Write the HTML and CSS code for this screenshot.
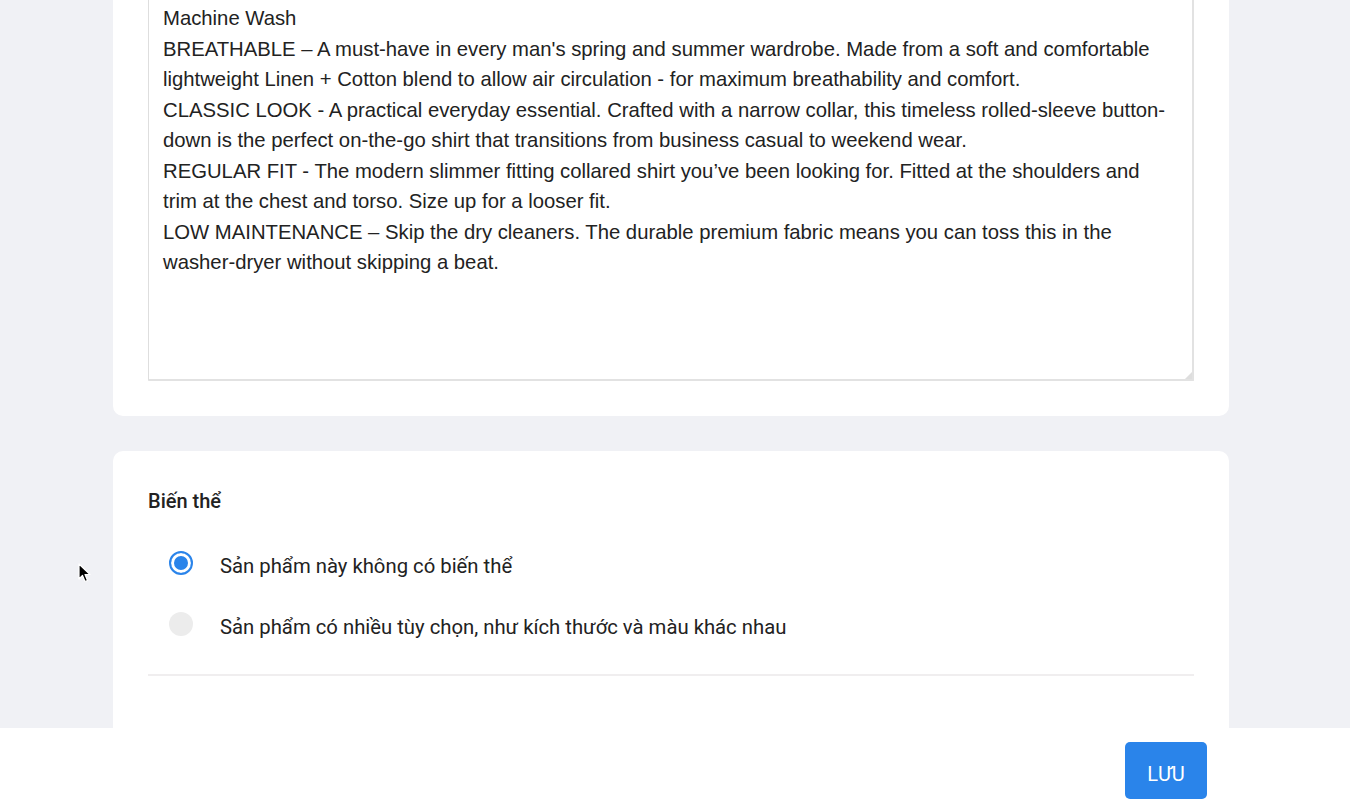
FILE: index.html
```html
<!DOCTYPE html>
<html lang="vi">
<head>
<meta charset="utf-8">
<link rel="stylesheet" href="styles.css">
</head>
<body>
<main class="page">
  <section class="card card-desc">
    <div class="desc-wrap">
      <textarea class="desc" spellcheck="false">Machine Wash
BREATHABLE – A must-have in every man's spring and summer wardrobe. Made from a soft and comfortable lightweight Linen + Cotton blend to allow air circulation - for maximum breathability and comfort.
CLASSIC LOOK - A practical everyday essential. Crafted with a narrow collar, this timeless rolled-sleeve button-down is the perfect on-the-go shirt that transitions from business casual to weekend wear.
REGULAR FIT - The modern slimmer fitting collared shirt you’ve been looking for. Fitted at the shoulders and trim at the chest and torso. Size up for a looser fit.
LOW MAINTENANCE – Skip the dry cleaners. The durable premium fabric means you can toss this in the washer-dryer without skipping a beat.</textarea>
    </div>
  </section>
  <section class="card card-variant">
    <h2 class="title">Biến thể</h2>
    <div class="options">
      <label class="option">
        <span class="radio checked"></span>
        <span class="label">Sản phẩm này không có biến thể</span>
      </label>
      <label class="option">
        <span class="radio"></span>
        <span class="label">Sản phẩm có nhiều tùy chọn, như kích thước và màu khác nhau</span>
      </label>
    </div>
    <div class="divider"></div>
  </section>
</main>
<footer class="footer">
  <button class="save">LƯU</button>
</footer>
<svg class="cursor" width="14" height="22" viewBox="0 0 14 22"><path d="M1 1 L1 16 L4.5 12.5 L7 18.5 L9.5 17.5 L7 11.5 L12 11.5 Z" fill="#000" stroke="#fff" stroke-width="1.2" stroke-linejoin="round"/></svg>
</body>
</html>
```
FILE: styles.css
```css
* { box-sizing: border-box; }
html, body { margin: 0; padding: 0; }
body {
  background: #f0f1f5;
  font-family: "Liberation Sans", Arial, sans-serif;
  color: #222;
  overflow: hidden;
}
.page {
  width: 1116px;
  margin: -60px 0 0 113px;
  display: flex;
  flex-direction: column;
  gap: 35px;
}
.card {
  background: #fff;
  border-radius: 10px;
  padding: 35px;
}
.desc-wrap {
  position: relative;
}
.desc-wrap::after {
  content: "";
  position: absolute;
  right: 2px;
  bottom: 2px;
  width: 0;
  height: 0;
  border-style: solid;
  border-width: 0 0 7px 7px;
  border-color: transparent transparent #dedede transparent;
}
.desc {
  display: block;
  width: 100%;
  height: 406px;
  border: 1px solid #dedede;
  border-right: 2px solid #e2e2e2;
  border-bottom: 2px solid #e2e2e2;
  border-radius: 1px;
  padding: 27px 14px 0 14px;
  font-family: "Liberation Sans", Arial, sans-serif;
  font-size: 20.3px;
  line-height: 30.5px;
  color: #222;
  resize: none;
  overflow: hidden;
  outline: none;
  background: #fff;
}
.card-variant { padding-bottom: 160px; }
.title {
  margin: 0;
  font-family: Roboto, "Noto Sans", sans-serif;
  font-weight: 500;
  font-size: 20px;
  line-height: 30px;
  color: #222;
}
.options {
  margin-top: 19px;
  display: flex;
  flex-direction: column;
}
.option {
  height: 61px;
  display: flex;
  align-items: center;
  padding-left: 21px;
}
.radio {
  width: 24px;
  height: 24px;
  border-radius: 50%;
  background: #ececec;
  flex: none;
  margin-top: -6px;
}
.radio.checked {
  background: #fff;
  border: 2px solid #2a84ea;
  box-shadow: inset 0 0 0 3px #fff, inset 0 0 0 10px #2a84ea;
}
.label {
  margin-left: 27px;
  font-family: Roboto, "Noto Sans", sans-serif;
  font-size: 20.3px;
  color: #222;
}
.divider {
  margin-top: 17px;
  height: 2px;
  background: #f0eeef;
}
.footer {
  position: fixed;
  left: 0;
  right: 0;
  bottom: 0;
  height: 82px;
  background: #fff;
  display: flex;
  justify-content: flex-end;
  align-items: flex-start;
  padding: 14px 143px 0 0;
}
.save {
  width: 82px;
  height: 57px;
  border: none;
  border-radius: 5px;
  background: #2a84ea;
  color: #fff;
  font-family: Roboto, "Noto Sans", sans-serif;
  font-size: 20px;
  padding: 6px 0 0;
}
.cursor {
  position: fixed;
  left: 78px;
  top: 563px;
}
```
